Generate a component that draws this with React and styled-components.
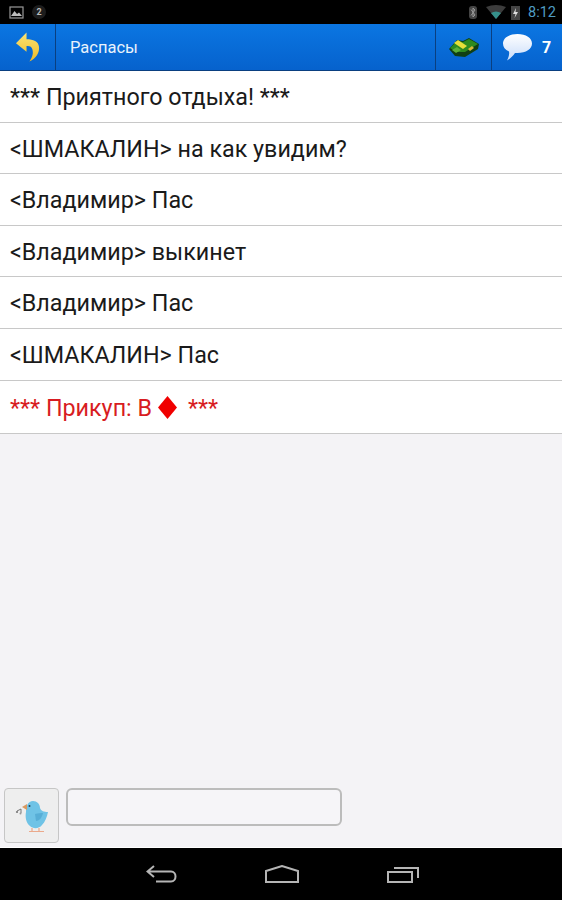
import React from 'react';
import styled, { createGlobalStyle } from 'styled-components';

const GlobalStyle = createGlobalStyle`
  html, body { margin: 0; padding: 0; }
  body { font-family: Roboto, "Noto Sans", sans-serif; background: #f4f3f6; }
`;

const Screen = styled.div`
  width: 562px;
  height: 900px;
  display: flex;
  flex-direction: column;
  overflow: hidden;
`;

const StatusBar = styled.div`
  height: 24px;
  flex: none;
  background: #000;
  display: flex;
  align-items: center;
  padding: 0 6px 0 9px;
  gap: 8px;
`;

const StatusSpacer = styled.div`
  flex: 1;
`;

const WifiIcon = styled.svg`
  width: 20px;
  height: 15px;
  margin-right: -3px;
`;

const Clock = styled.span`
  color: #4f9cc4;
  font-size: 14.5px;
`;

const Badge = styled.span`
  width: 14px;
  height: 14px;
  border-radius: 50%;
  background: #1d1d1d;
  color: #bbb;
  font-size: 9px;
  font-weight: 700;
  display: flex;
  align-items: center;
  justify-content: center;
`;

const Toolbar = styled.div`
  height: 47px;
  flex: none;
  display: flex;
  background: linear-gradient(#0b76e2, #0662cd);
  border-bottom: 1px solid #0a3f80;
  box-sizing: border-box;
  box-shadow: 0 1px 1px rgba(0, 0, 0, 0.25);
`;

const ToolButton = styled.div`
  width: ${p => p.$w}px;
  flex: none;
  display: flex;
  align-items: center;
  justify-content: center;
  gap: 10px;
  box-sizing: border-box;
  border-right: ${p => (p.$noBorder ? 'none' : '1px solid #0a3f80')};
`;

const Title = styled.div`
  flex: 1;
  padding-left: 14px;
  display: flex;
  align-items: center;
  color: #e8f2fc;
  font-size: 16.5px;
  border-right: 1px solid #0a3f80;
`;

const Count = styled.span`
  color: #fff;
  font-size: 16px;
  font-weight: 700;
`;

const Messages = styled.div`
  background: #fff;
  flex: none;
`;

const Row = styled.div`
  height: ${p => p.$h}px;
  box-sizing: border-box;
  padding: 1px 0 0 10px;
  display: flex;
  align-items: center;
  font-size: 23.3px;
  white-space: pre;
  color: ${p => (p.$system ? '#d81c22' : '#1a1a1a')};
  border-bottom: 1px solid #c8c8c8;
`;

const Diamond = styled.svg`
  width: 19px;
  height: 23px;
  margin: 0 11px 0 6px;
  flex: none;
`;

const Filler = styled.div`
  flex: 1;
`;

const InputBar = styled.div`
  height: 59px;
  flex: none;
  display: flex;
  align-items: flex-start;
  padding-left: 4px;
  gap: 7px;
`;

const BirdButton = styled.div`
  width: 55px;
  height: 55px;
  box-sizing: border-box;
  border: 1px solid #c6c6c6;
  border-radius: 4px;
  background: #eeeeee;
  display: flex;
  align-items: center;
  justify-content: center;
`;

const MessageInput = styled.div`
  width: 276px;
  height: 38px;
  box-sizing: border-box;
  border: 2px solid #bcbcbc;
  border-radius: 6px;
  background: #f6f5f8;
`;

const NavBar = styled.div`
  height: 53px;
  flex: none;
  background: #000;
  border-top: 1px solid #fff;
  box-sizing: border-box;
  display: flex;
  align-items: center;
  padding: 0 0 0 146px;
  gap: 88px;
`;

const rows = [
  { text: '*** Приятного отдыха! ***', h: 52 },
  { text: '<ШМАКАЛИН> на как увидим?', h: 51 },
  { text: '<Владимир> Пас', h: 52 },
  { text: '<Владимир> выкинет', h: 51 },
  { text: '<Владимир> Пас', h: 52 },
  { text: '<ШМАКАЛИН> Пас', h: 52 },
];

const App = () => (
  <Screen>
    <GlobalStyle />
    <StatusBar>
      <svg width="15" height="13" viewBox="0 0 15 13">
        <rect x="1" y="1" width="13" height="11" fill="none" stroke="#999" strokeWidth="1.2" />
        <path d="M2 10 L5.5 5 L8 8 L10 6.500 L13 10 Z" fill="#bbb" />
      </svg>
      <Badge>2</Badge>
      <StatusSpacer />
      <svg width="10" height="15" viewBox="0 0 10 15">
        <rect x="1" y="1" width="8" height="13" rx="3" fill="#444" />
        <path d="M3 4.500 L7 10 L5 12 V3 L7 5 L3 10.500" fill="none" stroke="#999" strokeWidth="1" />
      </svg>
      <WifiIcon viewBox="0 0 20 15">
        <path d="M0 2 Q10 -2 20 2 L10 14 Z" fill="#3c3c3c" />
        <path d="M5 8 Q10 5 15 8 L10 14 Z" fill="#35908a" />
      </WifiIcon>
      <svg width="9" height="15" viewBox="0 0 9 15">
        <rect x="0" y="1" width="9" height="14" fill="#444" />
        <path d="M5 3 L2 9 H4.500 L3.500 13 L7 7 H4.500 Z" fill="#ddd" />
      </svg>
      <Clock>8:12</Clock>
    </StatusBar>
    <Toolbar>
      <ToolButton $w={56}>
        <svg width="25" height="32" viewBox="0 0 26 32">
          <defs>
            <linearGradient id="arrowFill" x1="0" y1="0" x2="0" y2="1">
              <stop offset="0" stopColor="#fbe477" />
              <stop offset="1" stopColor="#edbb25" />
            </linearGradient>
          </defs>
          <path
            d="M12 1 L1 12 L12 21 L12 15 C17 14 19 18 18.500 23 C18 26 16.500 29 15 31 C22 28 25.500 22 25 16 C24.500 10 19 8 12 8 Z"
            fill="url(#arrowFill)"
          />
        </svg>
      </ToolButton>
      <Title>Распасы</Title>
      <ToolButton $w={56}>
        <svg width="32" height="22" viewBox="0 0 32 22">
          <path d="M1 13 L9 4 L15 5 L21 2 L31 8 L30 13 L17 21 L7 20 Z" fill="#103f14" />
          <path d="M2 12 L9 5 L15 6 L21 3 L30 8 L17 16 L8 16 Z" fill="#2d8a20" />
          <path d="M6 7 L10 4 L19 10 L15 13 Z" fill="#e6df3a" />
          <path d="M20 13 L24 10 L26 12 L22 15 Z" fill="#d6b83a" />
          <path d="M4 14 L9 11 L13 14 L8 17 Z" fill="#5cb03a" />
        </svg>
      </ToolButton>
      <ToolButton $w={70} $noBorder>
        <svg width="29" height="28" viewBox="0 0 29 28">
          <defs>
            <linearGradient id="bubbleFill" x1="0" y1="0" x2="0" y2="1">
              <stop offset="0" stopColor="#ffffff" />
              <stop offset="1" stopColor="#c8dcfa" />
            </linearGradient>
          </defs>
          <path
            d="M14.500 1 C23 1 29 5 29 10.500 C29 16 23 20 14.500 20 L12 20 C10 23 7 26 4 27.500 C6 24 6.500 21 6 18.500 C2 17 0 14 0 10.500 C0 5 6 1 14.500 1 Z"
            fill="url(#bubbleFill)"
          />
        </svg>
        <Count>7</Count>
      </ToolButton>
    </Toolbar>
    <Messages>
      {rows.map((row, i) => (
        <Row key={i} $h={row.h}>{row.text}</Row>
      ))}
      <Row $h={53} $system>
        *** Прикуп: В
        <Diamond viewBox="0 0 19 23">
          <path d="M9.500 0 L19 11.500 L9.500 23 L0 11.500 Z" fill="#f00000" />
        </Diamond>
        ***
      </Row>
    </Messages>
    <Filler />
    <InputBar>
      <BirdButton>
        <svg width="34" height="36" viewBox="0 0 34 36">
          <path
            d="M18 3 C22 3 25 6 25 10 C26 13 29 14 33 14 C32 19 30 24 27 27 C24 31 18 31 15 28 C11 25 10 19 11 14 C11 8 13 3 18 3 Z"
            fill="#6fc3e6"
          />
          <path d="M20 16 C23 15 26 15 28 15 C27 20 24 23 21 23 Z" fill="#57aed6" />
          <path d="M12 6 L7 9 L12 12 Z" fill="#d99a62" />
          <circle cx="14.500" cy="8" r="1" fill="#23404f" />
          <path d="M17 30 V33 M24 30 V33 M14 33.500 H21 M21 33.500 H29" stroke="#eba98b" strokeWidth="1.2" fill="none" />
          <path d="M2 13 L6 11 V15" stroke="#777" strokeWidth="1" fill="none" />
          <circle cx="2" cy="14" r="1.100" fill="#777" />
          <circle cx="5.500" cy="15.500" r="1" fill="#999" />
        </svg>
      </BirdButton>
      <MessageInput />
    </InputBar>
    <NavBar>
      <svg width="31" height="18" viewBox="0 0 31 18">
        <path d="M8 1 L1.500 6.500 L8 12 M2 6.500 H25 C31 6.500 31 16.500 25 16.500 H10" fill="none" stroke="#b5b5b5" strokeWidth="2" />
      </svg>
      <svg width="34" height="18" viewBox="0 0 34 18">
        <path d="M1 6 L17 1 L33 6 V17 H1 Z" fill="none" stroke="#b5b5b5" strokeWidth="2" />
      </svg>
      <svg width="32" height="18" viewBox="0 0 32 18">
        <path d="M1 7 H25 V17 H1 Z M7 3 H31 V13" fill="none" stroke="#b5b5b5" strokeWidth="2" />
      </svg>
    </NavBar>
  </Screen>
);

export default App;
